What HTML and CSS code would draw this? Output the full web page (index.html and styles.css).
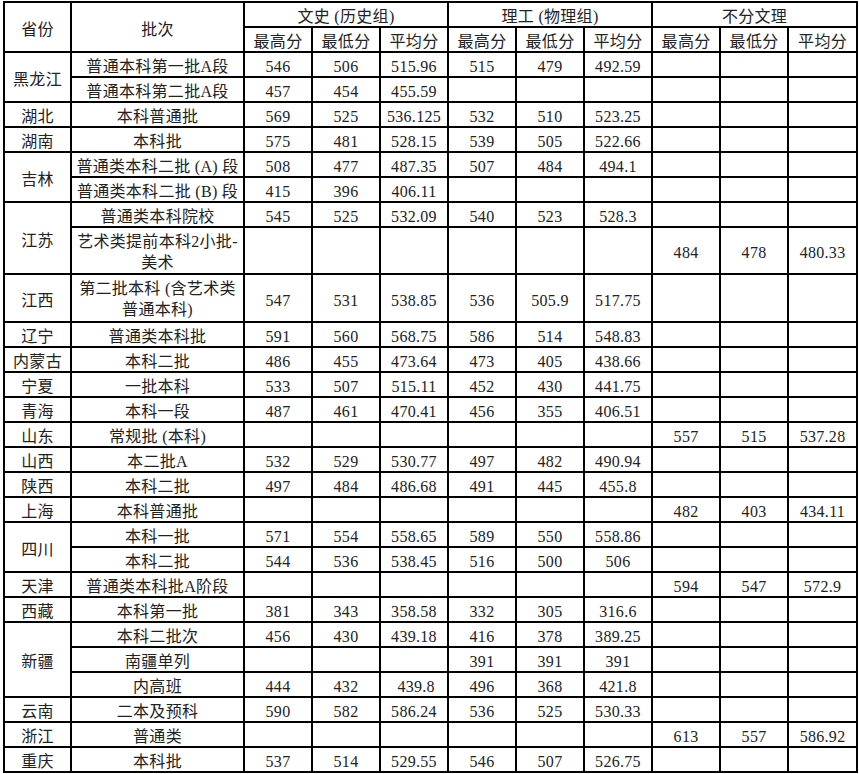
FILE: index.html
```html
<!DOCTYPE html>
<html lang="zh-CN">
<head>
<meta charset="utf-8">
<title>各省录取分数</title>
<link rel="stylesheet" href="styles.css">
</head>
<body>
<table class="grid">
  <colgroup>
    <col class="c-prov"><col class="c-batch">
    <col class="c-num"><col class="c-num"><col class="c-num">
    <col class="c-num"><col class="c-num"><col class="c-num">
    <col class="c-num"><col class="c-num"><col class="c-last">
  </colgroup>
  <thead>
    <tr>
      <th rowspan="2">省份</th>
      <th rowspan="2">批次</th>
      <th colspan="3">文史 (历史组)</th>
      <th colspan="3">理工 (物理组)</th>
      <th colspan="3">不分文理</th>
    </tr>
    <tr>
      <th>最高分</th><th>最低分</th><th>平均分</th>
      <th>最高分</th><th>最低分</th><th>平均分</th>
      <th>最高分</th><th>最低分</th><th>平均分</th>
    </tr>
  </thead>
  <tbody>
    <tr><td rowspan="2">黑龙江</td><td>普通本科第一批A段</td><td>546</td><td>506</td><td>515.96</td><td>515</td><td>479</td><td>492.59</td><td></td><td></td><td></td></tr>
    <tr><td>普通本科第二批A段</td><td>457</td><td>454</td><td>455.59</td><td></td><td></td><td></td><td></td><td></td><td></td></tr>
    <tr><td>湖北</td><td>本科普通批</td><td>569</td><td>525</td><td>536.125</td><td>532</td><td>510</td><td>523.25</td><td></td><td></td><td></td></tr>
    <tr><td>湖南</td><td>本科批</td><td>575</td><td>481</td><td>528.15</td><td>539</td><td>505</td><td>522.66</td><td></td><td></td><td></td></tr>
    <tr><td rowspan="2">吉林</td><td>普通类本科二批 (A) 段</td><td>508</td><td>477</td><td>487.35</td><td>507</td><td>484</td><td>494.1</td><td></td><td></td><td></td></tr>
    <tr><td>普通类本科二批 (B) 段</td><td>415</td><td>396</td><td>406.11</td><td></td><td></td><td></td><td></td><td></td><td></td></tr>
    <tr><td rowspan="2">江苏</td><td>普通类本科院校</td><td>545</td><td>525</td><td>532.09</td><td>540</td><td>523</td><td>528.3</td><td></td><td></td><td></td></tr>
    <tr class="tall47"><td class="wrap">艺术类提前本科2小批-<br>美术</td><td></td><td></td><td></td><td></td><td></td><td></td><td>484</td><td>478</td><td>480.33</td></tr>
    <tr class="tall48"><td>江西</td><td class="wrap">第二批本科 (含艺术类<br>普通本科)</td><td>547</td><td>531</td><td>538.85</td><td>536</td><td>505.9</td><td>517.75</td><td></td><td></td><td></td></tr>
    <tr><td>辽宁</td><td>普通类本科批</td><td>591</td><td>560</td><td>568.75</td><td>586</td><td>514</td><td>548.83</td><td></td><td></td><td></td></tr>
    <tr><td>内蒙古</td><td>本科二批</td><td>486</td><td>455</td><td>473.64</td><td>473</td><td>405</td><td>438.66</td><td></td><td></td><td></td></tr>
    <tr><td>宁夏</td><td>一批本科</td><td>533</td><td>507</td><td>515.11</td><td>452</td><td>430</td><td>441.75</td><td></td><td></td><td></td></tr>
    <tr><td>青海</td><td>本科一段</td><td>487</td><td>461</td><td>470.41</td><td>456</td><td>355</td><td>406.51</td><td></td><td></td><td></td></tr>
    <tr><td>山东</td><td>常规批 (本科)</td><td></td><td></td><td></td><td></td><td></td><td></td><td>557</td><td>515</td><td>537.28</td></tr>
    <tr><td>山西</td><td>本二批A</td><td>532</td><td>529</td><td>530.77</td><td>497</td><td>482</td><td>490.94</td><td></td><td></td><td></td></tr>
    <tr><td>陕西</td><td>本科二批</td><td>497</td><td>484</td><td>486.68</td><td>491</td><td>445</td><td>455.8</td><td></td><td></td><td></td></tr>
    <tr><td>上海</td><td>本科普通批</td><td></td><td></td><td></td><td></td><td></td><td></td><td>482</td><td>403</td><td>434.11</td></tr>
    <tr><td rowspan="2">四川</td><td>本科一批</td><td>571</td><td>554</td><td>558.65</td><td>589</td><td>550</td><td>558.86</td><td></td><td></td><td></td></tr>
    <tr><td>本科二批</td><td>544</td><td>536</td><td>538.45</td><td>516</td><td>500</td><td>506</td><td></td><td></td><td></td></tr>
    <tr><td>天津</td><td>普通类本科批A阶段</td><td></td><td></td><td></td><td></td><td></td><td></td><td>594</td><td>547</td><td>572.9</td></tr>
    <tr><td>西藏</td><td>本科第一批</td><td>381</td><td>343</td><td>358.58</td><td>332</td><td>305</td><td>316.6</td><td></td><td></td><td></td></tr>
    <tr><td rowspan="3">新疆</td><td>本科二批次</td><td>456</td><td>430</td><td>439.18</td><td>416</td><td>378</td><td>389.25</td><td></td><td></td><td></td></tr>
    <tr><td>南疆单列</td><td></td><td></td><td></td><td>391</td><td>391</td><td>391</td><td></td><td></td><td></td></tr>
    <tr><td>内高班</td><td>444</td><td>432</td><td>&nbsp;439.8</td><td>496</td><td>368</td><td>421.8</td><td></td><td></td><td></td></tr>
    <tr><td>云南</td><td>二本及预科</td><td>590</td><td>582</td><td>586.24</td><td>536</td><td>525</td><td>530.33</td><td></td><td></td><td></td></tr>
    <tr><td>浙江</td><td>普通类</td><td></td><td></td><td></td><td></td><td></td><td></td><td>613</td><td>557</td><td>586.92</td></tr>
    <tr><td>重庆</td><td>本科批</td><td>537</td><td>514</td><td>529.55</td><td>546</td><td>507</td><td>526.75</td><td></td><td></td><td></td></tr>
  </tbody>
</table>
</body>
</html>
```
FILE: styles.css
```css
html, body {
  margin: 0;
  padding: 0;
  background: #ffffff;
}

.grid {
  border-collapse: collapse;
  table-layout: fixed;
  width: 855px;
  margin: 1px 0 0 3px;
  font-family: "Liberation Serif", "Noto Sans CJK SC", serif;
  font-size: 16px;
  color: #222222;
}

.c-prov { width: 67px; }
.c-batch { width: 173px; }
.c-num { width: 68px; }
.c-last { width: 69px; }

.grid tr {
  height: 25px;
}

.grid th,
.grid td {
  border: 2px solid #000;
  padding: 4px 0 0;
  text-align: center;
  vertical-align: middle;
  font-weight: normal;
  line-height: 19px;
  letter-spacing: 0.3px;
  white-space: nowrap;
  overflow: hidden;
}

.grid td.wrap {
  line-height: 21px;
  padding-top: 2px;
}

.grid tr.tall47 { height: 47px; }
.grid tr.tall48 { height: 48px; }
```
